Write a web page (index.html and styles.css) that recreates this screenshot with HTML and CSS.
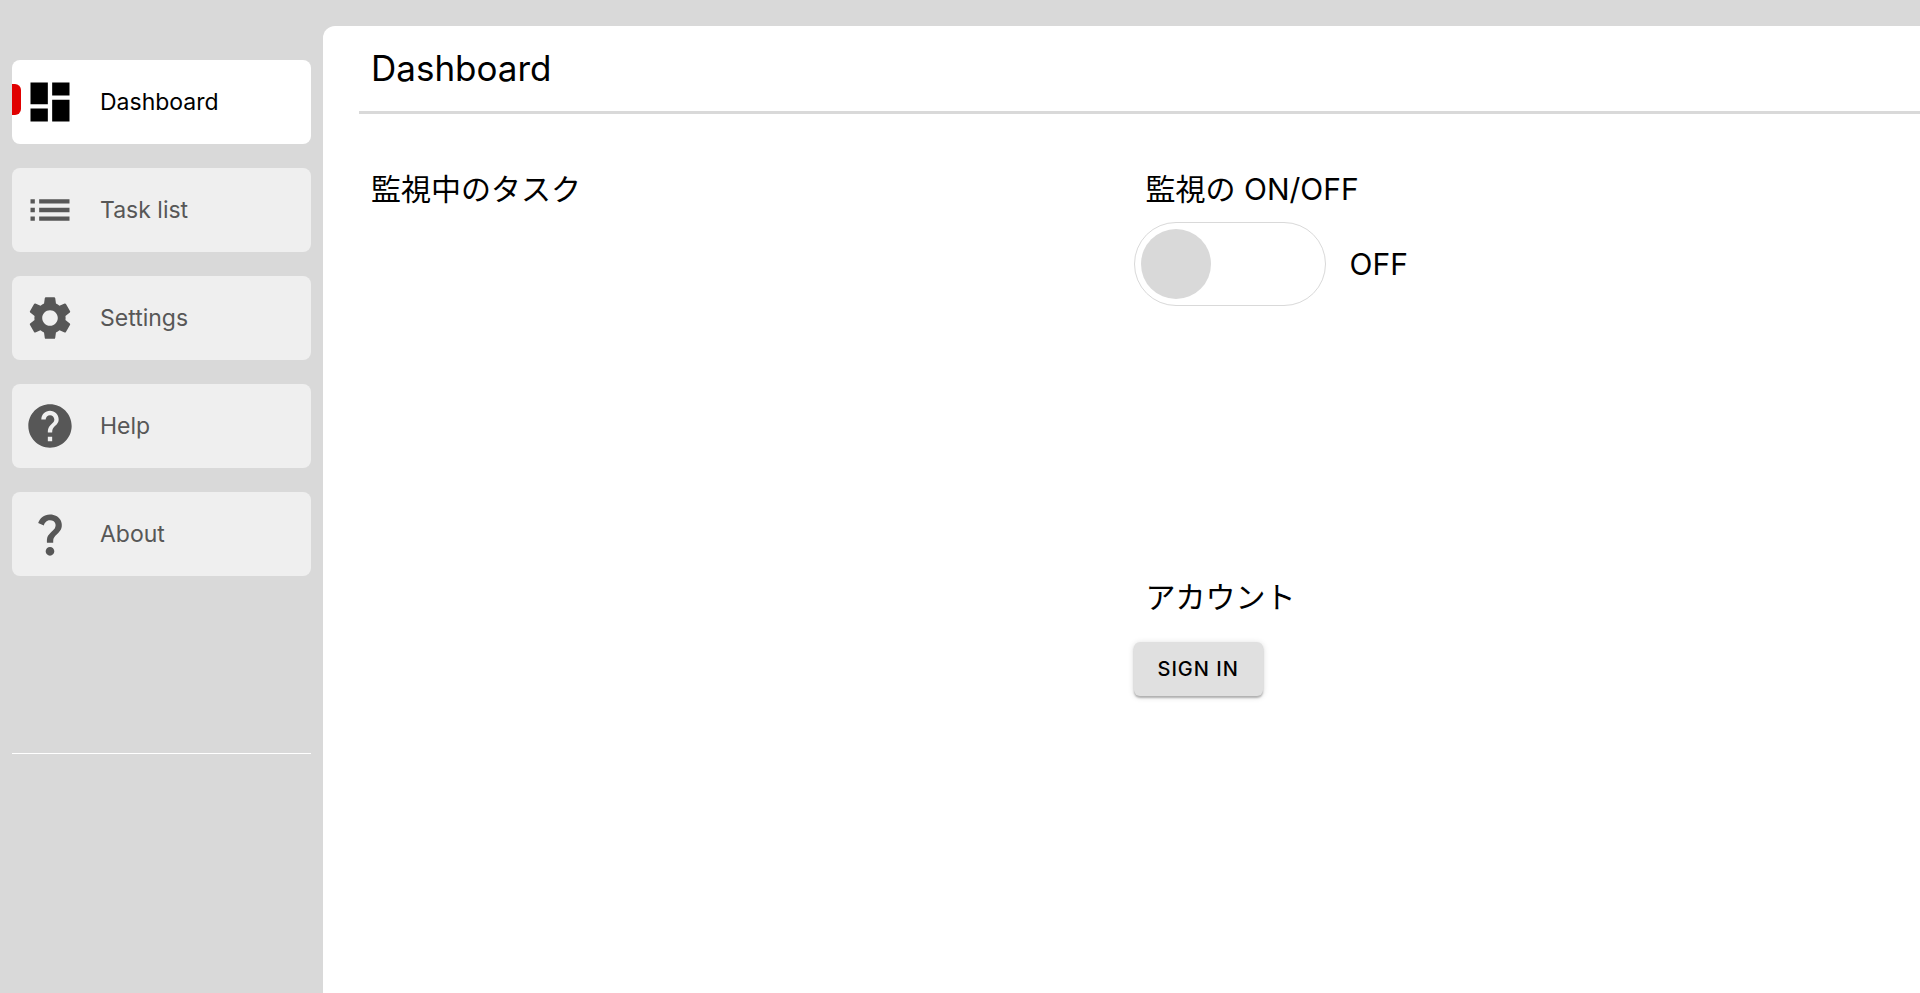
FILE: index.html
```html
<!DOCTYPE html>
<html lang="ja">
<head>
<meta charset="utf-8">
<title>Dashboard</title>
<link rel="stylesheet" href="styles.css">
</head>
<body>
<div class="app">
  <aside class="sidebar">
    <nav class="nav">
      <button class="nav-item nav-item-active" type="button" aria-current="page">
        <svg class="icon" viewBox="0 0 24 24" aria-hidden="true"><path d="M3 13h8V3H3v10zm0 8h8v-6H3v6zm10 0h8V11h-8v10zm0-18v6h8V3h-8z"/></svg>
        <span>Dashboard</span>
      </button>
      <button class="nav-item" type="button">
        <svg class="icon" viewBox="0 0 24 24" aria-hidden="true"><path d="M3 13h2v-2H3v2zm0 4h2v-2H3v2zm0-8h2V7H3v2zm4 4h14v-2H7v2zm0 4h14v-2H7v2zM7 7v2h14V7H7z"/></svg>
        <span>Task list</span>
      </button>
      <button class="nav-item" type="button">
        <svg class="icon" viewBox="0 0 24 24" aria-hidden="true"><path d="M19.14 12.94c.04-.3.06-.61.06-.94 0-.32-.02-.64-.07-.94l2.03-1.58c.18-.14.23-.41.12-.61l-1.92-3.32c-.12-.22-.37-.29-.59-.22l-2.39.96c-.5-.38-1.03-.7-1.62-.94l-.36-2.54c-.04-.24-.24-.41-.48-.41h-3.84c-.24 0-.43.17-.47.41l-.36 2.54c-.59.24-1.13.57-1.62.94l-2.39-.96c-.22-.08-.47 0-.59.22L2.74 8.87c-.12.21-.08.47.12.61l2.03 1.58c-.05.3-.09.63-.09.94s.02.64.07.94l-2.03 1.58c-.18.14-.23.41-.12.61l1.92 3.32c.12.22.37.29.59.22l2.39-.96c.5.38 1.03.7 1.62.94l.36 2.54c.05.24.24.41.48.41h3.84c.24 0 .44-.17.47-.41l.36-2.54c.59-.24 1.13-.56 1.62-.94l2.39.96c.22.08.47 0 .59-.22l1.92-3.32c.12-.22.07-.47-.12-.61l-2.01-1.58zM12 15.6c-1.98 0-3.6-1.62-3.6-3.6s1.62-3.6 3.6-3.6 3.6 1.62 3.6 3.6-1.62 3.6-3.6 3.6z"/></svg>
        <span>Settings</span>
      </button>
      <button class="nav-item" type="button">
        <svg class="icon" viewBox="0 0 24 24" aria-hidden="true"><path d="M12 2C6.48 2 2 6.48 2 12s4.480 10 10 10 10-4.480 10-10S17.520 2 12 2zm1 17h-2v-2h2v2zm2.070-7.750l-.9.920C13.450 12.900 13 13.500 13 15h-2v-.5c0-1.100.45-2.100 1.170-2.830l1.240-1.260c.37-.36.59-.86.59-1.410 0-1.100-.9-2-2-2s-2 .9-2 2H8c0-2.210 1.790-4 4-4s4 1.790 4 4c0 .88-.36 1.680-.93 2.250z"/></svg>
        <span>Help</span>
      </button>
      <button class="nav-item" type="button">
        <svg class="icon" viewBox="0 0 24 24" aria-hidden="true"><path d="M11.070 12.850c.77-1.390 2.250-2.210 3.110-3.440.91-1.290.4-3.700-2.180-3.700-1.690 0-2.520 1.280-2.870 2.340L6.540 6.960C7.250 4.830 9.180 3 11.990 3c2.350 0 3.960 1.070 4.780 2.410.7 1.150 1.110 3.300.03 4.900-1.200 1.770-2.350 2.310-2.970 3.450-.25.46-.35.76-.35 2.240h-2.890c-.01-.78-.13-2.050.48-3.150zM14 20c0 1.100-.9 2-2 2s-2-.9-2-2 .9-2 2-2 2 .9 2 2z"/></svg>
        <span>About</span>
      </button>
    </nav>
    <hr class="side-rule">
  </aside>
  <main class="panel">
    <h1 class="title">Dashboard</h1>
    <div class="columns">
      <section>
        <h2 class="heading">監視中のタスク</h2>
      </section>
      <div class="stack">
        <section>
          <h2 class="heading">監視の ON/OFF</h2>
          <label class="watch">
            <input class="toggle" type="checkbox" role="switch">
            <span>OFF</span>
          </label>
        </section>
        <section>
          <h2 class="heading">アカウント</h2>
          <button class="sign-in" type="button">SIGN IN</button>
        </section>
      </div>
    </div>
  </main>
</div>
</body>
</html>
```
FILE: styles.css
```css
* { box-sizing: border-box; }
body {
  margin: 0;
  background: #d9d9d9;
  color: #000;
  font-family: Inter, "Noto Sans CJK JP", sans-serif;
}
.app {
  display: grid;
  grid-template-columns: 323px 1fr;
  min-height: 100vh;
}
.sidebar { padding: 60px 12px 0; }
.nav {
  display: grid;
  gap: 24px;
}
.nav-item {
  position: relative;
  display: flex;
  align-items: center;
  gap: 24px;
  height: 84px;
  padding: 0 12px;
  border: 0;
  border-radius: 8px;
  background: #efefef;
  color: #575757;
  font: 400 23px/32px Inter, sans-serif;
  text-align: left;
}
.nav-item-active {
  background: #fff;
  color: #000;
}
.nav-item-active::before {
  content: "";
  position: absolute;
  top: 24px;
  left: 0;
  width: 9px;
  height: 31px;
  border-radius: 0 6px 6px 0;
  background: #e00000;
}
.icon {
  width: 52px;
  height: 52px;
  fill: currentColor;
}
.side-rule {
  height: 1px;
  margin: 177px 0 0;
  border: 0;
  background: #fff;
}
.panel {
  margin-top: 26px;
  padding-left: 36px;
  border-top-left-radius: 12px;
  background: #fff;
}
.title {
  margin: 0;
  padding: 18px 12px 19px;
  border-bottom: 3px solid #d9d9d9;
  font-weight: 400;
  font-size: 35px;
  line-height: 48px;
}
.columns {
  display: grid;
  grid-template-columns: 1fr 1fr;
  padding-top: 48px;
  padding-right: 12px;
}
.stack {
  display: grid;
  grid-template-rows: 408px auto;
}
.heading {
  margin: 0;
  padding: 3px 12px 5px;
  font-weight: 400;
  font-size: 30px;
  line-height: 48px;
}
.watch {
  display: flex;
  align-items: center;
  gap: 24px;
  margin-top: 4px;
  font-size: 30px;
}
.toggle {
  appearance: none;
  display: flex;
  align-items: center;
  width: 192px;
  height: 84px;
  margin: 0;
  padding: 0 6px;
  border: 1px solid #d9d9d9;
  border-radius: 42px;
}
.toggle::before {
  content: "";
  width: 70px;
  height: 70px;
  border-radius: 50%;
  background: #d9d9d9;
}
.sign-in {
  margin-top: 16px;
  padding: 9px 24px;
  border: 0;
  border-radius: 6px;
  background: #e0e0e0;
  box-shadow: 0 2px 2px rgba(0, 0, 0, .25), 0 1px 6px rgba(0, 0, 0, .15);
  color: #000;
  font: 500 20px/36px Inter, sans-serif;
  letter-spacing: 1px;
}
```
